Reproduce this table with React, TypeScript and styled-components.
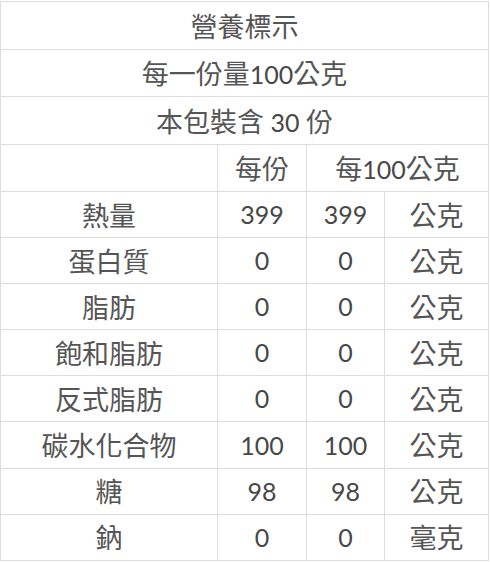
import React from "react";
import styled, { createGlobalStyle } from "styled-components";

const Global = createGlobalStyle`
  html, body { margin: 0; padding: 0; background: #ffffff; }
  body { font-family: "Lato", "Noto Sans CJK TC", sans-serif; }
`;

const Table = styled.table`
  margin-top: 1px;
  width: 488px;
  border-collapse: collapse;
  table-layout: fixed;
  font-family: "Lato", "Noto Sans CJK TC", sans-serif;
  font-size: 25px;
  color: #474747;
`;

const Row = styled.tr<{ $h: number }>`
  height: ${(p) => p.$h}px;
`;

const Cell = styled.td`
  border: 1px solid #dcdcdc;
  text-align: center;
  vertical-align: middle;
  padding: 0;
  line-height: 1;
  white-space: nowrap;
`;

const Han = styled.span`
  font-family: "Noto Sans CJK TC", sans-serif;
  font-size: 27px;
  color: #555555;
  line-height: 1;
`;

type Item = { name: string; per: string; per100: string; unit: string };

const items: Item[] = [
  { name: "熱量", per: "399", per100: "399", unit: "公克" },
  { name: "蛋白質", per: "0", per100: "0", unit: "公克" },
  { name: "脂肪", per: "0", per100: "0", unit: "公克" },
  { name: "飽和脂肪", per: "0", per100: "0", unit: "公克" },
  { name: "反式脂肪", per: "0", per100: "0", unit: "公克" },
  { name: "碳水化合物", per: "100", per100: "100", unit: "公克" },
  { name: "糖", per: "98", per100: "98", unit: "公克" },
  { name: "鈉", per: "0", per100: "0", unit: "毫克" },
];

export default function App() {
  return (
    <>
      <Global />
      <Table>
        <colgroup>
          <col style={{ width: 217 }} />
          <col style={{ width: 89 }} />
          <col style={{ width: 78 }} />
          <col style={{ width: 104 }} />
        </colgroup>
        <tbody>
          <Row $h={48}>
            <Cell colSpan={4}>
              <Han>營養標示</Han>
            </Cell>
          </Row>
          <Row $h={47}>
            <Cell colSpan={4}>
              <Han>每一份量</Han>100<Han>公克</Han>
            </Cell>
          </Row>
          <Row $h={48}>
            <Cell colSpan={4}>
              <Han>本包裝含</Han> 30 <Han>份</Han>
            </Cell>
          </Row>
          <Row $h={47}>
            <Cell />
            <Cell>
              <Han>每份</Han>
            </Cell>
            <Cell colSpan={2}>
              <Han>每</Han>100<Han>公克</Han>
            </Cell>
          </Row>
          {items.map((it) => (
            <Row $h={46.1} key={it.name}>
              <Cell>
                <Han>{it.name}</Han>
              </Cell>
              <Cell>{it.per}</Cell>
              <Cell>{it.per100}</Cell>
              <Cell>
                <Han>{it.unit}</Han>
              </Cell>
            </Row>
          ))}
        </tbody>
      </Table>
    </>
  );
}
